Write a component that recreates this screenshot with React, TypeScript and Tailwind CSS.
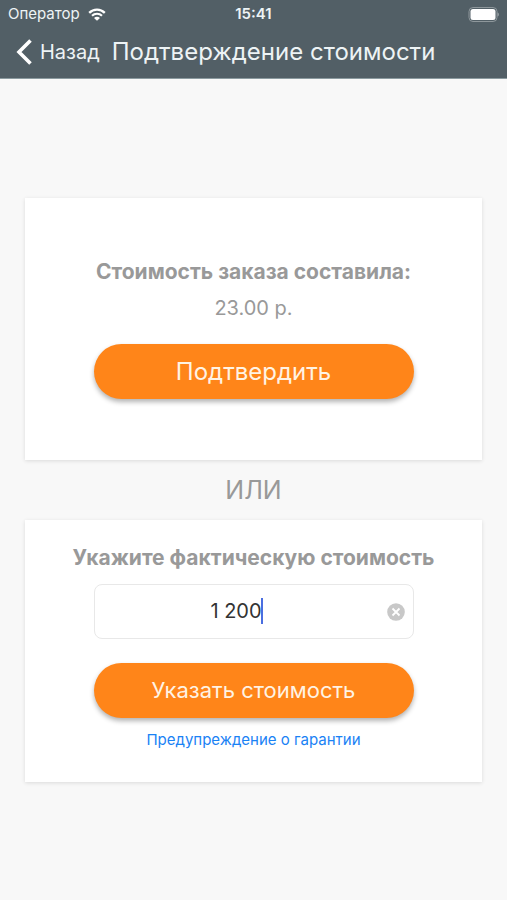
import { useState } from "react";

function StatusBar() {
  return (
    <div className="grid h-7 grid-cols-3 items-center px-2 text-[15px] leading-4">
      <div className="flex items-center gap-2">
        <span>Оператор</span>
        <svg className="h-[13px] w-[18px]" viewBox="0 0 18 13" fill="none" aria-hidden="true">
          <path d="M1.200 4.900C5.500.6 12.500.6 16.800 4.900" stroke="white" strokeWidth="2.300" />
          <path d="M4 7.800c2.800-2.700 7.200-2.700 10 0" stroke="white" strokeWidth="2.100" />
          <path d="M9 12.800 6 9.900c1.700-1.500 4.300-1.500 6 0z" fill="white" />
        </svg>
      </div>
      <span className="text-center font-semibold">15:41</span>
      <svg className="h-[15px] w-8 justify-self-end" viewBox="0 0 32 15" fill="none" aria-hidden="true">
        <rect x="2" y=".5" width="28" height="14" rx="4" stroke="#8e979b" />
        <rect x="3.500" y="2" width="25" height="11" rx="2.500" fill="white" />
        <path d="M30.500 5.500c1.800.6 1.800 3.400 0 4z" fill="#9ca4a8" />
      </svg>
    </div>
  );
}

function PillButton({ children, large = false }: { children: string; large?: boolean }) {
  return (
    <button
      type="button"
      className={`h-[55px] w-full max-w-80 rounded-full bg-[#ff8519] text-[#fff3e4] shadow-[0_3px_5px_rgba(0,0,0,0.3)] ${
        large ? "text-2xl" : "text-[22px]"
      }`}
    >
      {children}
    </button>
  );
}

const card =
  "flex flex-col items-center bg-white px-4 shadow-[0_1px_4px_rgba(0,0,0,0.12)]";

export default function App() {
  const [cost, setCost] = useState("1 200");

  return (
    <div className="min-h-screen bg-[#f8f8f8] font-['Inter','Liberation_Sans',sans-serif]">
      <header className="border-b border-[#8b9a9f] bg-[#525f66] text-[#edf3f5]">
        <StatusBar />
        <div className="flex h-[50px] items-center gap-3 pb-0.5 pl-4">
          <a href="#back" className="flex items-center gap-2 text-xl">
            <svg className="h-[26px] w-4" viewBox="0 0 16 26" fill="none" aria-hidden="true">
              <path d="M14.500 1.500 3 13l11.500 11.500" stroke="white" strokeWidth="3.600" />
            </svg>
            Назад
          </a>
          <h1 className="text-2xl whitespace-nowrap">Подтверждение стоимости</h1>
        </div>
      </header>

      <main className="px-[25px] pt-[119px] pb-8">
        <section className={`${card} pt-[60px] pb-[61px]`}>
          <h2 className="text-[21px] leading-7 font-bold text-[#999999]">
            Стоимость заказа составила:
          </h2>
          <p className="mt-2 mb-[22px] text-xl leading-7 text-[#999999]">23.00 р.</p>
          <PillButton large>Подтвердить</PillButton>
        </section>

        <p className="py-[14px] text-center text-[25px] leading-8 text-[#999999]">ИЛИ</p>

        <form className={`${card} pt-6 pb-8`}>
          <label htmlFor="cost" className="text-[21px] leading-7 font-bold text-[#999999]">
            Укажите фактическую стоимость
          </label>
          <div className="mt-3 mb-6 flex h-[55px] w-full max-w-80 items-center rounded-lg border border-[#e8e8e8] pr-2">
            <div className="flex flex-1 items-center justify-center pr-2 pb-0.5">
              <input
                id="cost"
                inputMode="numeric"
                value={cost}
                onChange={(event) => setCost(event.target.value)}
                className="[field-sizing:content] text-xl leading-7 text-[#333333] caret-transparent outline-none"
              />
              <span className="-ml-px h-[26px] w-[2px] bg-[#4a6ee0]" />
            </div>
            <button type="button" aria-label="Очистить" onClick={() => setCost("")}>
              <svg className="size-[18px]" viewBox="0 0 18 18" aria-hidden="true">
                <circle cx="9" cy="9" r="8.800" fill="#c8c8c8" />
                <path d="m5.500 5.500 7 7m0-7-7 7" stroke="white" strokeWidth="1.800" />
              </svg>
            </button>
          </div>
          <PillButton>Указать стоимость</PillButton>
          <a href="#warranty" className="mt-3 text-[15px] leading-5 text-[#1a82f5]">
            Предупреждение о гарантии
          </a>
        </form>
      </main>
    </div>
  );
}
